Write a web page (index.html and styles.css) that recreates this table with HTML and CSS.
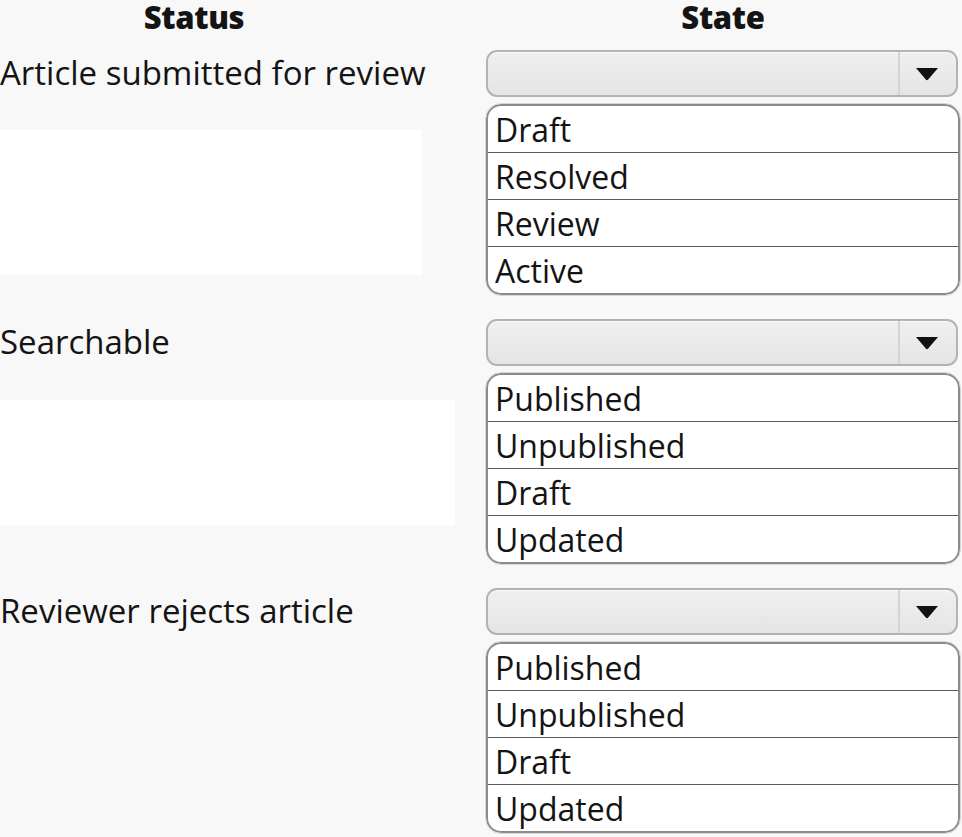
FILE: index.html
```html
<!DOCTYPE html>
<html lang="en">
<head>
  <meta charset="UTF-8">
  <title>Status / State</title>
  <link rel="stylesheet" href="styles.css">
</head>
<body>

  <div class="sheet">
    <div class="head-row">
      <div class="head head-status">Status</div>
      <div class="head">State</div>
    </div>

    <div class="item">
      <div class="label">Article submitted for review</div>
      <div class="select">
        <span class="value"></span>
        <span class="btn"><svg width="24" height="14" viewBox="0 0 24 14"><path d="M1 1 H23 L13.2 12.6 Q12 13.8 10.8 12.6 Z" fill="#111"/></svg></span>
      </div>
      <div class="blank blank-one"></div>
      <ul class="options">
        <li>Draft</li>
        <li>Resolved</li>
        <li>Review</li>
        <li>Active</li>
      </ul>
    </div>

    <div class="item">
      <div class="label">Searchable</div>
      <div class="select">
        <span class="value"></span>
        <span class="btn"><svg width="24" height="14" viewBox="0 0 24 14"><path d="M1 1 H23 L13.2 12.6 Q12 13.8 10.8 12.6 Z" fill="#111"/></svg></span>
      </div>
      <div class="blank blank-two"></div>
      <ul class="options">
        <li>Published</li>
        <li>Unpublished</li>
        <li>Draft</li>
        <li>Updated</li>
      </ul>
    </div>

    <div class="item">
      <div class="label">Reviewer rejects article</div>
      <div class="select">
        <span class="value"></span>
        <span class="btn"><svg width="24" height="14" viewBox="0 0 24 14"><path d="M1 1 H23 L13.2 12.6 Q12 13.8 10.8 12.6 Z" fill="#111"/></svg></span>
      </div>
      <div class="blank"></div>
      <ul class="options">
        <li>Published</li>
        <li>Unpublished</li>
        <li>Draft</li>
        <li>Updated</li>
      </ul>
    </div>
  </div>

</body>
</html>
```

FILE: styles.css
```css
body {
  margin: 0;
  background: #f8f8f8;
  font-family: 'Open Sans', 'Noto Sans', sans-serif;
  font-weight: 500;
  color: #141414;
}

.sheet {
  width: 962px;
}

.head-row {
  display: grid;
  grid-template-columns: 486px 474px;
  height: 50px;
}

.head {
  font-weight: 800;
  font-size: 31px;
  line-height: 34px;
  text-align: center;
  letter-spacing: -0.3px;
}

.head-status {
  padding-right: 98px;
}

.item {
  display: grid;
  grid-template-columns: 486px 474px;
  row-gap: 7px;
  margin-bottom: 24px;
}

.label {
  align-self: center;
  font-size: 33px;
  padding-bottom: 2px;
  white-space: nowrap;
}

.select {
  display: flex;
  width: 472px;
  height: 47px;
  box-sizing: border-box;
  border: 2px solid #b3b3b3;
  border-radius: 11px;
  background: linear-gradient(#efefef, #e5e5e5);
  box-shadow: inset 0 1px 0 #fafafa;
}

.value {
  flex: 1;
}

.btn {
  width: 54px;
  border-left: 2px solid #d4d4d4;
  display: flex;
  align-items: center;
  justify-content: center;
  padding-right: 2px;
}

.blank-one {
  width: 422px;
  height: 145px;
  margin-top: 26px;
  background: #ffffff;
}

.blank-two {
  width: 455px;
  height: 125px;
  margin-top: 27px;
  background: #ffffff;
}

.options {
  list-style: none;
  margin: 0;
  padding: 0;
  width: 474px;
  box-sizing: border-box;
  border: 2px solid #8c8c8c;
  border-radius: 15px;
  background: #fff;
  overflow: hidden;
  outline: 1px solid #d6d6d6;
}

.options li {
  height: 46px;
  line-height: 47px;
  padding-left: 7px;
  font-size: 32px;
}

.options li + li {
  border-top: 1px solid #5a5a5a;
}
```
